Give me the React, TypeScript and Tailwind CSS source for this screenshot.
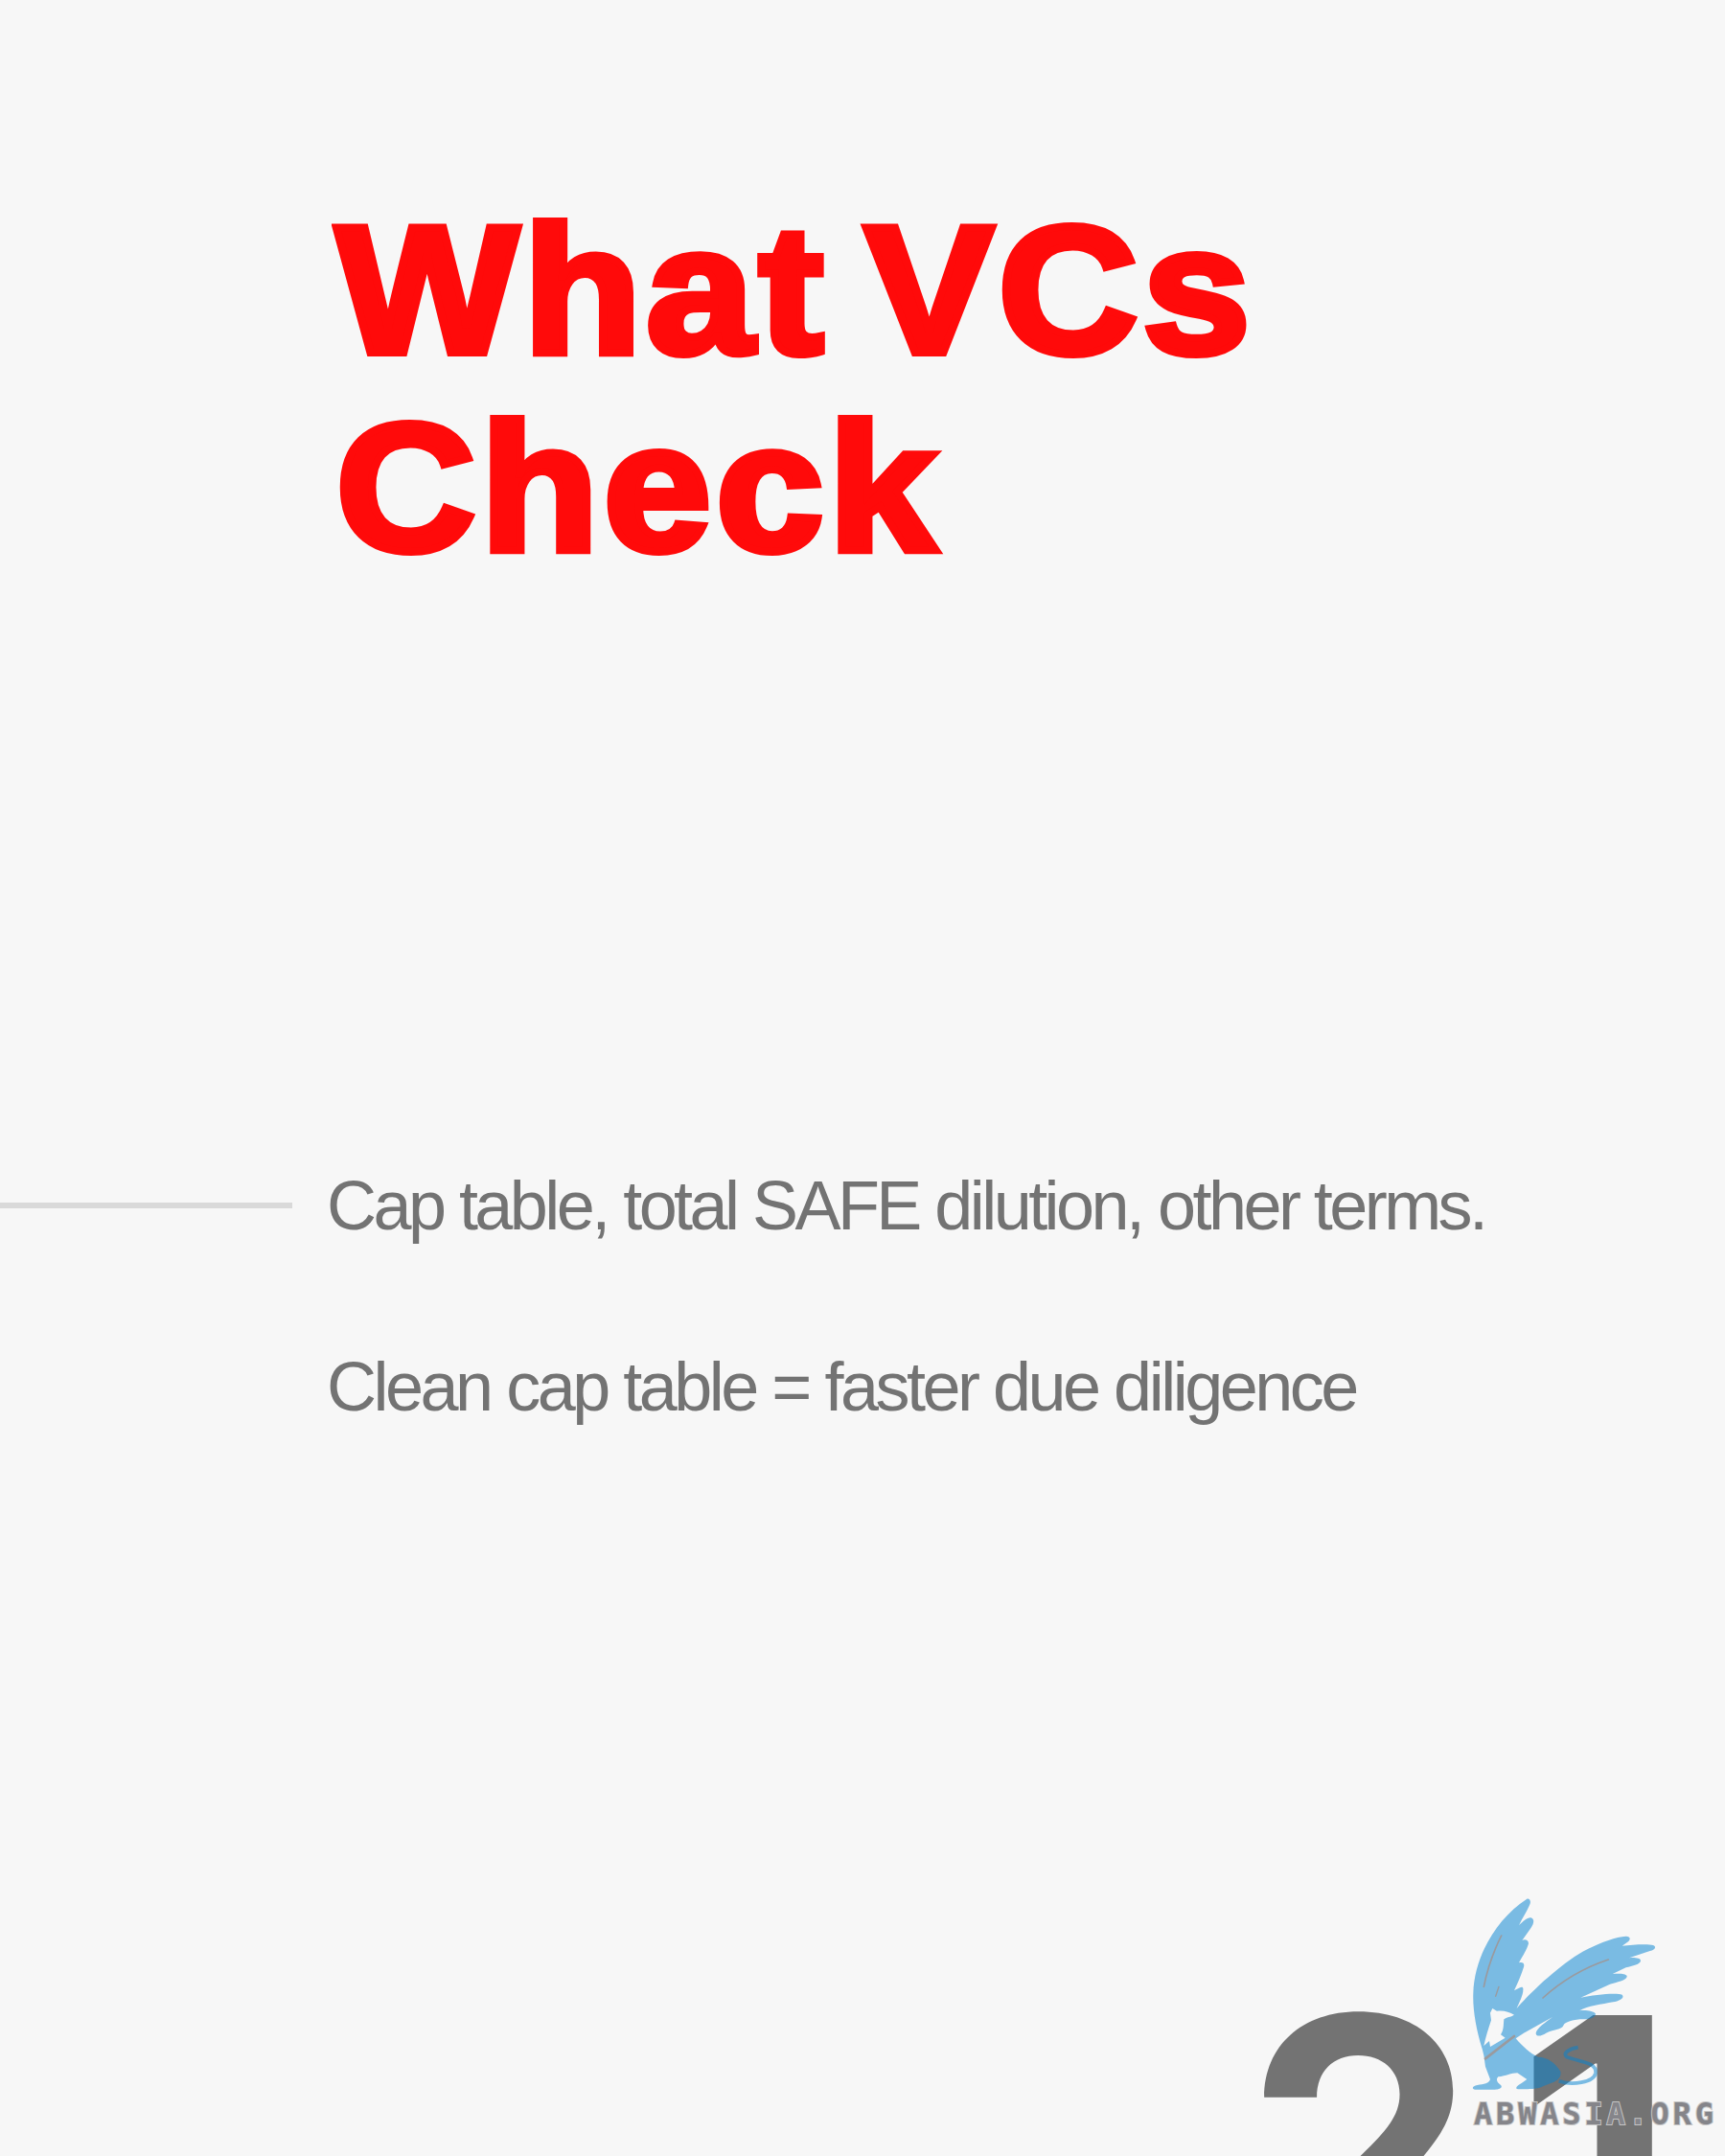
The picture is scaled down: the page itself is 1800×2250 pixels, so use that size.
const griffin =
  "M190 35 C200 33 204 45 198 55 C190 75 175 95 165 118 C178 105 195 90 205 95 C215 100 210 115 203 125 L175 165 C185 160 195 165 195 175 C190 195 175 215 165 235 C178 232 183 238 180 248 C172 275 160 300 150 322 C160 318 175 305 178 315 C180 335 165 360 158 378 C190 340 260 270 340 215 C395 180 460 155 500 152 C512 152 516 160 508 168 L488 182 C520 178 570 175 585 180 C597 185 590 195 575 198 L510 220 C525 218 545 220 546 228 C546 240 520 245 500 250 L458 270 C475 268 498 268 503 276 C505 290 470 295 450 302 L358 344 C400 335 470 328 488 335 C497 345 480 355 460 358 C425 365 380 370 355 385 C370 382 400 385 405 395 C403 410 380 412 365 412 C340 412 308 420 305 430 C300 445 270 445 250 455 C235 465 218 468 218 455 C220 440 250 420 270 405 L180 455 L155 472 C175 495 200 520 225 530 C255 530 280 550 295 575 C298 590 290 600 275 608 L240 622 C225 632 180 632 158 630 C152 622 170 615 190 600 L160 580 C140 580 125 590 100 592 C92 600 96 610 108 618 C115 625 105 632 90 632 L28 632 C15 630 20 620 35 618 C55 615 72 612 75 600 L60 560 L55 525 L50 505 C30 440 20 380 22 330 C25 220 90 100 190 35 Z";

const griffinCutout =
  "M75 392 L82 378 L96 386 C115 383 135 388 150 398 C140 405 125 405 118 412 C116 430 118 445 108 460 L122 470 L75 498 L72 480 L55 495 C60 470 70 440 78 415 Z";

export default function App() {
  return (
    <div className="relative flex h-[2250px] w-[1800px] flex-col overflow-hidden bg-[#f7f7f7] font-['Liberation_Sans',sans-serif]">
      <h1 className="origin-left scale-x-[1.06] pl-[331px] pt-[199px] text-[190px] font-bold leading-[206px] tracking-[5px] text-[#ff0a0a] [word-spacing:-22px] [-webkit-text-stroke:8px_#ff0a0a]">
        What VCs
        <br />
        Check
      </h1>

      <div className="mt-[607px] flex items-center gap-[36px]">
        <div className="h-[6px] w-[305px] bg-[#d9d9d9]" />
        <p className="text-[72px] leading-[80px] tracking-[-3.55px] text-[#737373]">
          Cap table, total SAFE dilution, other terms.
        </p>
      </div>
      <p className="mt-[109px] pl-[341px] text-[72px] leading-[80px] tracking-[-3.5px] text-[#737373]">
        Clean cap table = faster due diligence
      </p>

      <div className="mt-[564px] self-end pr-[9px] font-['Inter',sans-serif] text-[385px] font-bold leading-[385px] tracking-[42px] text-[#737373]">
        21
      </div>

      {/* watermark over the page number */}
      <div className="absolute left-[1530px] top-[1970px] h-[280px] w-[270px]">
        <svg viewBox="0 0 810 636" className="absolute left-0 top-0 h-[212px] w-[270px]">
          <path d={griffin} fill="#0482d0" fillOpacity={0.515} />
          <path d={griffinCutout} fill="#f7f7f7" />
          <path d="M290 605 C330 620 400 610 405 580 C410 545 350 545 315 530 C300 520 320 505 350 500" fill="none" stroke="#0482d0" strokeOpacity={0.515} strokeWidth={11} />
          <g fill="none" stroke="#9a9a9e" strokeLinecap="round">
            <path d="M110 150 C85 200 65 260 55 310" strokeWidth={5} />
            <path d="M102 310 L92 340" strokeWidth={4} />
            <path d="M445 225 C370 250 295 295 240 345" strokeWidth={5} />
            <path d="M60 535 L150 465" strokeWidth={8} />
          </g>
        </svg>
        <span className="absolute left-[8px] top-[220px] font-['DejaVu_Sans_Mono',monospace] text-[32px] font-bold leading-[32px] tracking-[3.8px] text-[#85858a] [-webkit-text-stroke:2px_#c4c4c4] [paint-order:stroke_fill]">
          ABWASIA.ORG
        </span>
      </div>
    </div>
  );
}
